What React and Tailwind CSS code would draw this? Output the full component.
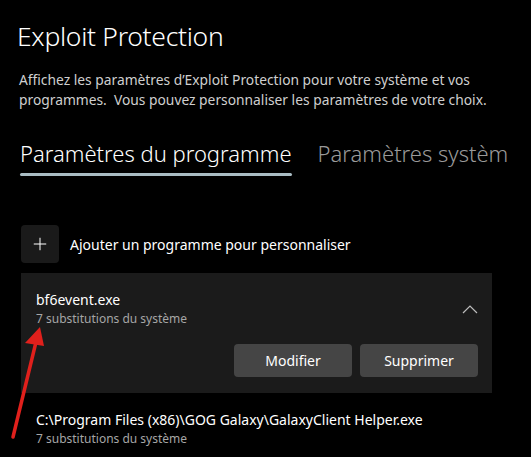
import { Plus } from "lucide-react";

const font = { fontFamily: '"Noto Sans", "Open Sans", sans-serif' };

const ProgramItem = ({ name, count, expanded }) => (
  <div className={expanded ? "bg-[#1b1b1b] w-[471px] pl-[15px] pr-[14px] pt-[17px] pb-[16px]" : "w-[471px] pl-[15px] pt-[17px]"}>
    <div className="flex items-center justify-between">
      <div className="flex flex-col">
        <span className="text-[14px] leading-[19px] text-white">{name}</span>
        <span className="text-[12px] leading-[19px] text-[#a6a6a6]">{count} substitutions du système</span>
      </div>
      {expanded && (
        <svg width="16" height="9" viewBox="0 0 16 9" className="mt-[1px]">
          <path d="M1 8 L8 1 L15 8" fill="none" stroke="#bdbdbd" strokeWidth="1.2" />
        </svg>
      )}
    </div>
    {expanded && (
      <div className="flex justify-end gap-[8px] mt-[16px]">
        <button className="w-[118px] h-[33px] rounded-[4px] bg-[#454545] text-[14px] text-white">Modifier</button>
        <button className="w-[118px] h-[33px] rounded-[4px] bg-[#454545] text-[14px] text-white">Supprimer</button>
      </div>
    )}
  </div>
);

const App = () => {
  return (
    <div className="relative w-[531px] h-[457px] overflow-hidden bg-black text-white" style={font}>
      <div className="flex flex-col pl-[17px] pt-[19px]">
        <h1 className="text-[26.5px] leading-[34px] font-light tracking-[-0.3px]">Exploit Protection</h1>
        <p className="mt-[17px] pl-[2px] w-[500px] text-[13.8px] leading-[20px] text-[#cfcfcf]">
          Affichez les paramètres d’Exploit Protection pour votre système et vos programmes.&nbsp; Vous pouvez personnaliser les paramètres de votre choix.
        </p>

        {/* Tabs */}
        <div className="mt-[28px] pl-[3px] flex gap-[26px] whitespace-nowrap">
          <div className="flex flex-col">
            <span className="text-[22px] leading-[30px] font-light">Paramètres du programme</span>
            <div className="mt-[5px] h-[3px] rounded-full bg-[#a9bcc3]" />
          </div>
          <span className="text-[22px] leading-[30px] font-light text-[#9a9a9a]">Paramètres systèm</span>
        </div>

        {/* Add */}
        <div className="mt-[49px] pl-[4px] flex items-center gap-[11px]">
          <div className="w-[38px] h-[38px] rounded-[4px] bg-[#1a1a1a] flex items-center justify-center">
            <Plus size={20} strokeWidth={1.2} className="text-white" />
          </div>
          <span className="text-[14px]">Ajouter un programme pour personnaliser</span>
        </div>

        <div className="mt-[10px] pl-[4px] flex flex-col">
          <ProgramItem name="bf6event.exe" count={7} expanded />
          <ProgramItem name="C:\Program Files (x86)\GOG Galaxy\GalaxyClient Helper.exe" count={7} />
        </div>
      </div>

      {/* red annotation arrow */}
      <svg className="absolute left-0 top-0" width="531" height="457" viewBox="0 0 531 457">
        <line x1="13" y1="437" x2="36" y2="342" stroke="#e0201c" strokeWidth="3.5" strokeLinecap="round" />
        <polygon points="40,327 25,343 44,346" fill="#e0201c" />
      </svg>
    </div>
  );
};

export default App;
